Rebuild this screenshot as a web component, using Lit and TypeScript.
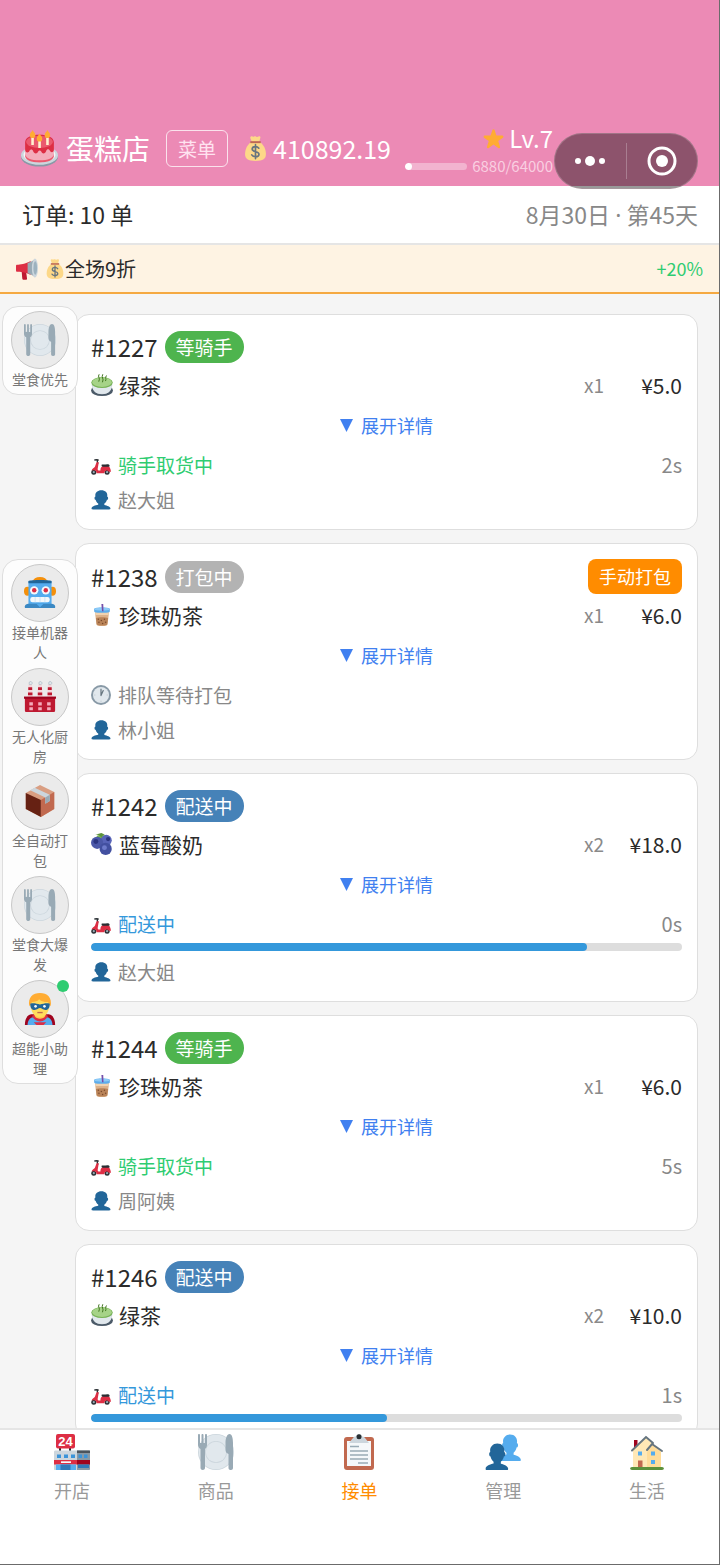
import { LitElement, html, css, svg, nothing } from 'lit';
import { customElement, property } from 'lit/decorators.js';
import { classMap } from 'lit/directives/class-map.js';

const BUST =
  'M24 26.8v-2.57c2-1.35 4.08-3.78 4.7-6.9.19.1.21.17.42.17.99 0 1.71-1.28 1.71-2.87 0-1.56-.83-2.82-1.8-2.86.19-.67.3-1.58.3-2.74C29.32 5.17 26 .53 18.54.53 11.91.53 7.76 5.17 7.76 9.03c0 1.13.07 2.05.19 2.76-.91.14-1.63 1.35-1.63 2.84 0 1.59.8 2.87 1.8 2.87.2 0 .02-.06.2-.17.63 3.12 2.68 5.55 4.68 6.9v2.41c-5 .65-12 3.44-12 6.24v1.06C1 35 2.08 35 3.14 35h29.72C33.92 35 35 35 35 33.94v-1.06c0-2.62-6-5.23-11-6.08z';

const icons = {
  cake: svg`
    <ellipse cx="18" cy="26" rx="18" ry="9.5" fill="#8899A6"/>
    <ellipse cx="18" cy="24.5" rx="18" ry="9.3" fill="#CCD6DD"/>
    <ellipse cx="18" cy="24" rx="15.5" ry="7.5" fill="#F5F8FA"/>
    <path d="M4 14v10c0 4 6 7 14 7s14-3 14-7V14z" fill="#F4ABBA"/>
    <path d="M4 23c0 4 6 6.5 14 6.5S32 27 32 23v2c0 4-6 6.5-14 6.5S4 29 4 25z" fill="#EA596E"/>
    <path d="M4 12C4 7 10 4.500 18 4.500S32 7 32 12v7c0 3-3 3.500-4 1-1-2-3-1.500-3.500.500-.8 3-4 3-4.800.500-.6-1.500-2.400-1.500-3 0-.9 2.500-4 2.500-5-.500-.6-2-2.700-2-3.500 0C7 23 4 22 4 19z" fill="#DD2E44"/>
    <ellipse cx="18" cy="11.500" rx="13" ry="6" fill="#EA596E"/>
    <path d="M10 6.500h2.500v8H10zm6.800 3h2.500v8h-2.500zM24.500 6.500H27v8h-2.500z" fill="#FFF2D0"/>
    <path d="M11.300 0c1 2 2.700 3 2.700 5s-1.200 2.700-2.700 2.700S8.600 7 8.600 5s1.700-3 2.700-5zM18 3.500c1 2 2.700 3 2.700 5s-1.200 2.700-2.700 2.700-2.700-.7-2.700-2.700 1.700-3 2.700-5zM25.700 0c1 2 2.700 3 2.700 5s-1.200 2.700-2.700 2.700S23 7 23 5s1.700-3 2.700-5z" fill="#FFAC33"/>`,
  money: svg`
    <path d="M24 8.500c7 4.500 9 12 9 17.500 0 7-4 10-15 10S3 33 3 26c0-5.500 2-13 9-17.500z" fill="#FDD888"/>
    <path d="M11 1c2-1.500 3 .5 4.500 0s2-1 3.500 0 2.500 0 4-.5 2.500.5 2 2L23.500 8h-11L10.500 3c-.3-1 0-1.500.5-2z" fill="#FDD888"/>
    <path d="M10.500 7.500h15v2.800h-15z" fill="#BF6952"/>
    <path d="M22.800 17.500c-1.200-1.600-2.900-2.300-4.800-2.300-2.800 0-4.800 1.300-4.800 3.600 0 5.200 9.800 2.500 9.800 7.400 0 2.300-2.100 3.700-5 3.700-2.400 0-4.300-1-5.400-2.700M18 12.500v20" fill="none" stroke="#67757F" stroke-width="2.400" stroke-linecap="round"/>`,
  star: svg`<path d="M27.290 34.630c-.4 0-.8-.13-1.150-.37L18 28.420l-8.140 5.840a1.970 1.970 0 0 1-3.030-2.200l3.040-9.800-8.070-5.680a1.980 1.980 0 0 1 1.160-3.570L12.950 13l3.180-9.550a1.980 1.980 0 0 1 3.740 0L23 13l10.040.01a1.980 1.980 0 0 1 1.160 3.570l-8.070 5.680 3.040 9.800a1.970 1.970 0 0 1-1.880 2.570z" fill="#FFAC33"/>`,
  horn: svg`
    <path d="M9 19h7l2 14c.2 1.600-.6 2.500-2 2.500h-3.500c-1.300 0-2-.7-2.200-2z" fill="#BE1931"/>
    <path d="M2 11c4 0 14-1 22-6v23c-8-5-18-5.500-22-5.500-1.300 0-2-.8-2-2v-7.500c0-1.200.7-2 2-2z" fill="#DD2E44"/>
    <path d="M19 8.300C24 6.500 28 4 31 1.500v30c-3-2.500-7-5-12-6.500z" fill="#99AAB5"/>
    <ellipse cx="31" cy="16.500" rx="5" ry="15.500" fill="#CCD6DD"/>
    <ellipse cx="31.500" cy="16.500" rx="3" ry="11" fill="#9DB2BF"/>`,
  plate: svg`
    <circle cx="18" cy="18" r="18" fill="#CCD6DD"/>
    <circle cx="18" cy="18" r="17.200" fill="#E1E8ED"/>
    <circle cx="18" cy="18" r="11" fill="#CCD6DD"/>
    <circle cx="18" cy="18" r="10.200" fill="#E1E8ED"/>
    <path d="M0 1c0-1.300 2-1.300 2 0v8h1.500V1c0-1.300 2-1.300 2 0v8H7V1c0-1.300 2-1.300 2 0v10c0 2-1 3.300-2 4v19c0 2.600-4.500 2.600-4.500 0V15C1 14.300 0 13 0 11zM31.500 0C34 0 35 4 35 9v25c0 2.700-4.500 2.700-4.500 0V20c-2-.7-3-2-3-4.500V9c0-5 1.500-9 4-9z" fill="#99AAB5"/>`,
  robot: svg`
    <ellipse cx="18" cy="5" rx="8" ry="5" fill="#F4900C"/>
    <ellipse cx="4" cy="16" rx="4" ry="5" fill="#F4900C"/>
    <ellipse cx="32" cy="16" rx="4" ry="5" fill="#F4900C"/>
    <path d="M5 5c0-1.500 26-1.500 26 0v26H5z" fill="#55ACEE"/>
    <path d="M5 4.500c3-1.500 23-1.500 26 0V7H5z" fill="#226699"/>
    <path d="M1 33c0-2 2-3 4-3h26c2 0 4 1 4 3v2H1z" fill="#3B88C3"/>
    <path d="M14 30h8l-4 4z" fill="#55ACEE"/>
    <circle cx="11.500" cy="15" r="4.700" fill="#F5F8FA"/><circle cx="24.500" cy="15" r="4.700" fill="#F5F8FA"/>
    <circle cx="11.500" cy="15" r="2.500" fill="#DD2E44"/><circle cx="24.500" cy="15" r="2.500" fill="#DD2E44"/>
    <rect x="7" y="22.500" width="22" height="6" rx="2.500" fill="#F5F8FA"/>
    <path d="M12.500 22.500v6m5.500-6v6m5.500-6v6" stroke="#BDDDF4" stroke-width=".8"/>`,
  factory: svg`
    <path d="M4 18 5 4h4l1 14zM15 18l1-14h4l1 14zM26 18l1-14h4l1 14z" fill="#F5D5DA"/>
    <path d="M4.800 7h4.400v3H4.800zm-.3 6h5v3h-5zM15.800 7h4.400v3h-4.400zm-.3 6h5v3h-5zM26.800 7h4.400v3h-4.400zm-.3 6h5v3h-5z" fill="#BE1931"/>
    <path d="M6 4c-1-3 1-4 2.500-3S9 4 8 4zm11 0c-1-3 1-4 2.500-3S20 4 19 4zm11 0c-1-3 1-4 2.500-3S31 4 30 4z" fill="#E1E8ED" stroke="#99AAB5" stroke-width=".6"/>
    <path d="M1 19h34v14c0 1.500-.5 2-2 2H3c-1.500 0-2-.5-2-2z" fill="#BE1931"/>
    <path d="M0 17.500h36v2.500H0z" fill="#A0041E"/>
    <path d="M6 24h4v3.500H6zm10 0h4v3.500h-4zm10 0h4v3.500h-4zM6 29.500h4V33H6zm10 0h4V33h-4zm10 0h4V33h-4z" fill="#F4ABBA"/>`,
  box: svg`
    <path d="M18 0 34 8v19L19 36 2 27V9z" fill="#D99E82"/>
    <path d="m2 9 17 8v19L2 27z" fill="#662113"/>
    <path d="m19 17 15-9v19l-15 9z" fill="#C1694F"/>
    <path d="m7 6 5-3 17 8v7l-5 3v-7z" fill="#CCD6DD"/>
    <path d="m24 14 5-3v7l-5 3z" fill="#99AAB5"/>`,
  hero: svg`
    <path d="M1 36c0-6 2-11 7-12h20c5 1 7 6 7 12z" fill="#A0041E"/>
    <path d="M4 36c0-5 3-9 8-9h12c5 0 8 4 8 9z" fill="#55ACEE"/>
    <path d="M9 26c2 4 5 6 9 6s7-2 9-6l-3-2H12z" fill="#DD2E44"/>
    <path d="M12 20h12v6c-2 4-10 4-12 0z" fill="#FFCC4D"/>
    <path d="M7 10c0 10 4 17 11 17s11-7 11-17c0-7-22-7-22 0z" fill="#FFDC5D"/>
    <path d="M6 15C4 5 10 0 18 0s14 5 12 15l-3-5c-6 1-10-3-10-3-1 2-5 3-8 3z" fill="#FFAC33"/>
    <path d="M7 12c4-1 7 0 11 1 4-1 7-2 11-1 0 5-2 7-5 7s-4-2-6-2-3 2-6 2-5-2-5-7z" fill="#226699"/>
    <circle cx="13" cy="15" r="1.500" fill="#F5F8FA"/><circle cx="23" cy="15" r="1.500" fill="#F5F8FA"/>
    <path d="M15 22h6" stroke="#C1694F" stroke-width="1.500"/>
    <path d="M11 33h14l-3 3h-8z" fill="#DD2E44"/>`,
  tea: svg`
    <ellipse cx="18" cy="27" rx="18" ry="9" fill="#4B5A68"/>
    <path d="M1 14c0 13 6 19 17 19s17-6 17-19z" fill="#CCD6DD"/>
    <path d="M2 20c1.500 9 7 12.500 16 12.500S32.500 29 34 20z" fill="#E1E8ED"/>
    <ellipse cx="18" cy="14" rx="17.500" ry="9" fill="#77B255"/>
    <ellipse cx="18" cy="13.500" rx="16" ry="7.800" fill="#A6D388"/>
    <path d="M13 1c-3 4 3 5 0 11M19 1c-3 5 3 6 0 12M25 3c-3 4 1 4-1 8" fill="none" stroke="#3E721D" stroke-width="1.600" stroke-linecap="round"/>`,
  boba: svg`
    <path d="m6 10 3 23c.3 2 2 3 9 3s8.700-1 9-3l3-23z" fill="#DDB28A"/>
    <path d="M6 9h24l-1.200 9H7.200z" fill="#F1D3B0"/>
    <path d="M5 8c2-3 24-3 26 0l-.5 5C25 15 11 15 5.500 13z" fill="#5DADEC"/>
    <ellipse cx="18" cy="8.500" rx="12.500" ry="2.700" fill="#8CCAF7"/>
    <path d="m17 0 3-.5L20.500 12H18z" fill="#744EAA"/>
    <path d="M8 23c4-2 16-2 20 0l-1.300 10c-.3 3-17 3-17.400 0z" fill="#B98358"/>
    <g fill="#7A4A2E"><circle cx="12" cy="25" r="1.200"/><circle cx="17" cy="27" r="1.200"/><circle cx="22" cy="25" r="1.200"/><circle cx="13" cy="30" r="1.200"/><circle cx="19" cy="32" r="1.200"/><circle cx="24" cy="30" r="1.200"/></g>`,
  berry: svg`
    <path d="M9 6c2-5 6 0 7-5 2 4 6 1 8 5-2 4-5 3-7 6-2-3-6-2-8-6z" fill="#77B255"/>
    <circle cx="25" cy="12" r="9" fill="#5864B8"/>
    <circle cx="10" cy="16" r="10" fill="#4B58A8"/>
    <circle cx="24" cy="26" r="10" fill="#4250A0"/>
    <circle cx="8" cy="14" r="4" fill="#2B3580"/><circle cx="22" cy="24" r="4" fill="#6E7BCB"/>
    <circle cx="28" cy="10" r="3.500" fill="#2B3580"/>
    <path d="M7 3c5-1 8 1 10 5 1-4 4-6 6-5l-6-3z" fill="#5C913B"/>`,
  scooter: svg`
    <circle cx="5" cy="31" r="4.500" fill="#292F33"/><circle cx="5" cy="31" r="2" fill="#99AAB5"/>
    <circle cx="29" cy="31" r="4.500" fill="#292F33"/><circle cx="29" cy="31" r="2" fill="#99AAB5"/>
    <path d="M7 9c3-1 5-1 6 0M11 9l1 6" stroke="#292F33" stroke-width="2.500" fill="none" stroke-linecap="round"/>
    <path d="M10 13h4l-2 12c0 3 2 3 5 3 0-6 3-8 7-8h7c3 1 4 5 5 10h-4c-2-3-6-3-8 1v2H10c0-5-3-7-9-5 1-4 5-5 6-7z" fill="#DD2E44"/>
    <path d="M20 17c4 1 8-1 12 0 2 1 2 4 0 4H21c-2 0-3-4-1-4z" fill="#292F33"/>`,
  bust: svg`<path d=${BUST} fill="#226699"/>`,
  busts: svg`
    <path d=${BUST} transform="translate(13) scale(.65 .77)" fill="#55ACEE"/>
    <path d=${BUST} transform="translate(0 9) scale(.66 .77)" fill="#226699"/>`,
  clock: svg`
    <circle cx="18" cy="18" r="18" fill="#8899A6"/>
    <circle cx="18" cy="18" r="14.500" fill="#E1E8ED"/>
    <path d="M18 5v3m0 20v3M5 18h3m20 0h3" stroke="#B5C1CA" stroke-width="1.200"/>
    <path d="M18 19V8m0 11 4-9" stroke="#66757F" stroke-width="2.200" stroke-linecap="round"/>`,
  shop: svg`
    <path d="M5 13h2v5H5zm10 0h2v5h-2z" fill="#292F33"/>
    <path d="M0 18c0-1 .5-1.500 1.500-1.500H23V36H1c-.6 0-1-.4-1-1z" fill="#CCD6DD"/>
    <path d="M23 16.500h11.500c1 0 1.500.5 1.500 1.500v17c0 .6-.4 1-1 1H23z" fill="#8899A6"/>
    <path d="M23 16.500h13V19H23z" fill="#4B545D"/>
    <path d="M3 20.500h4V24H3zm7 0h4V24h-4zm7 0h4V24h-4zm7.500 0H28V24h-3.500zm5.500 0h3.500V24H30z" fill="#3B94D9"/>
    <path d="M0 26h23v4.500H0z" fill="#DD2E44"/><path d="M23 26h13v4.500H23z" fill="#A0041E"/>
    <path d="M7 27.300h10v1.700H7z" fill="#F5F8FA"/>
    <path d="M2 30.500h20V36H2z" fill="#55ACEE"/><path d="M6.500 30.500h10V36h-10zM24 30.500h11V34H24z" fill="#3078B8"/>
    <rect x="2" y="0" width="19" height="14.500" rx="2" fill="#DD2E44"/>
    <text x="11.500" y="12" text-anchor="middle" font-family="Liberation Sans, sans-serif" font-size="13" font-weight="700" fill="#fff">24</text>`,
  clipboard: svg`
    <rect x="3" y="3" width="30" height="33" rx="3" fill="#C1694F"/>
    <path d="M6 7h24v25H6z" fill="#F5F8FA"/>
    <path d="M9 12.500h9M9 17h18M9 21h18M9 25h18M17 29h10" stroke="#99AAB5" stroke-width="1.300"/>
    <path d="M12 4c1-2 3-1 3-2 1-2.700 5-2.700 6 0 0 1 2 0 3 2l4 5H8z" fill="#CCD6DD"/>
    <circle cx="18" cy="2.800" r="2.500" fill="#292F33"/>`,
  house: svg`
    <path d="M5 6h3.500v8H5z" fill="#A0041E"/>
    <path d="M4 16 17 4l6 5 9 8v17H4z" fill="#FFE8B6"/>
    <path d="m18 18 6-8 8 8v16H18z" fill="#FFDC99"/>
    <path d="M3 16.500 17 3l7 6M18 16l5-6 10 7" fill="none" stroke="#66757F" stroke-width="2" stroke-linecap="round"/>
    <path d="M9 17.500h4v4H9zm13 0h4v4h-4zM22 26h4v4h-4z" fill="#55ACEE"/>
    <path d="M9 26.500h4.500V34H9z" fill="#C1694F"/>
    <path d="M3 33h30c2.500 0 2.500 3 0 3H3c-2.500 0-2.500-3 0-3z" fill="#5C913B"/>`,
};

type IconName = keyof typeof icons;

interface Order {
  id: number;
  state: 'waiting' | 'packing' | 'delivering';
  icon: IconName;
  product: string;
  qty: number;
  price: string;
  seconds?: number;
  progress?: number;
  customer?: string;
}

const STATES = {
  waiting: { badge: '等骑手', status: '骑手取货中', icon: 'scooter' as IconName },
  packing: { badge: '打包中', status: '排队等待打包', icon: 'clock' as IconName },
  delivering: { badge: '配送中', status: '配送中', icon: 'scooter' as IconName },
};

const ORDERS: Order[] = [
  { id: 1227, state: 'waiting', icon: 'tea', product: '绿茶', qty: 1, price: '5.0', seconds: 2, customer: '赵大姐' },
  { id: 1238, state: 'packing', icon: 'boba', product: '珍珠奶茶', qty: 1, price: '6.0', customer: '林小姐' },
  { id: 1242, state: 'delivering', icon: 'berry', product: '蓝莓酸奶', qty: 2, price: '18.0', seconds: 0, progress: 84, customer: '赵大姐' },
  { id: 1244, state: 'waiting', icon: 'boba', product: '珍珠奶茶', qty: 1, price: '6.0', seconds: 5, customer: '周阿姨' },
  { id: 1246, state: 'delivering', icon: 'tea', product: '绿茶', qty: 2, price: '10.0', seconds: 1, progress: 50 },
];

const HELPERS: { icon: IconName; label: string; active?: boolean }[] = [
  { icon: 'robot', label: '接单机器人' },
  { icon: 'factory', label: '无人化厨房' },
  { icon: 'box', label: '全自动打包' },
  { icon: 'plate', label: '堂食大爆发' },
  { icon: 'hero', label: '超能小助理', active: true },
];

const TABS: { icon: IconName; label: string }[] = [
  { icon: 'shop', label: '开店' },
  { icon: 'plate', label: '商品' },
  { icon: 'clipboard', label: '接单' },
  { icon: 'busts', label: '管理' },
  { icon: 'house', label: '生活' },
];

@customElement('app-icon')
class AppIcon extends LitElement {
  static styles = css`
    :host {
      display: block;
      flex: none;
      width: 20px;
      height: 20px;
    }

    svg {
      display: block;
      width: 100%;
      height: 100%;
    }
  `;

  @property() name: IconName = 'star';

  render() {
    return html`<svg viewBox="0 0 36 36" aria-hidden="true">${icons[this.name]}</svg>`;
  }
}

@customElement('order-card')
class OrderCard extends LitElement {
  static styles = css`
    :host {
      display: block;
      flex: none;
      padding: 15px;
      background: #fff;
      border: 1px solid #dedede;
      border-radius: 14px;
      color: #2b2b2b;
    }

    button {
      font-family: inherit;
      border: none;
      cursor: pointer;
    }

    .head {
      display: flex;
      align-items: center;
      gap: 7px;
      min-height: 34px;
    }

    .number {
      font-size: 24px;
      line-height: 32px;
    }

    .badge {
      padding: 0 11px;
      border-radius: 16px;
      font-size: 19px;
      line-height: 32px;
      color: #fff;
    }

    .badge.waiting {
      background: #4eb44e;
    }

    .badge.packing {
      background: #b3b3b3;
    }

    .badge.delivering {
      background: #4682b8;
    }

    .pack {
      margin-left: auto;
      padding: 0 11px;
      border-radius: 8px;
      background: #ff8c00;
      color: #fff;
      font-size: 18px;
      line-height: 35px;
    }

    .product {
      display: flex;
      align-items: center;
      margin-top: 5px;
      font-size: 21px;
      line-height: 32px;
    }

    .product app-icon {
      width: 22px;
      height: 22px;
      margin-right: 6px;
    }

    .qty {
      margin-left: auto;
      font-size: 19px;
      color: #8a8a8a;
    }

    .price {
      width: 78px;
      text-align: right;
    }

    .toggle {
      display: flex;
      align-items: center;
      justify-content: center;
      gap: 8px;
      width: 100%;
      height: 50px;
      padding: 0 0 2px;
      background: none;
      color: #4080f0;
      font-size: 18px;
    }

    .toggle svg {
      width: 13px;
      height: 13px;
    }

    .line {
      display: flex;
      align-items: center;
      gap: 7px;
      font-size: 19px;
      line-height: 28px;
      color: #888;
    }

    .line.waiting .status {
      color: #2ecc71;
    }

    .line.delivering .status {
      color: #3498db;
    }

    .time {
      margin-left: auto;
      font-size: 20px;
    }

    .bar {
      height: 8px;
      margin-top: 5px;
      border-radius: 4px;
      background: #ddd;
      overflow: hidden;
    }

    .fill {
      height: 100%;
      border-radius: 4px;
      background: #3498db;
    }

    .customer {
      margin-top: 7px;
    }
  `;

  @property({ attribute: false }) order!: Order;

  render() {
    const o = this.order;
    const info = STATES[o.state];
    return html`
      <div class="head">
        <span class="number">#${o.id}</span>
        <span class="badge ${o.state}">${info.badge}</span>
        ${o.state === 'packing' ? html`<button class="pack">手动打包</button>` : nothing}
      </div>
      <div class="product">
        <app-icon name=${o.icon}></app-icon>
        <span>${o.product}</span>
        <span class="qty">x${o.qty}</span>
        <span class="price">¥${o.price}</span>
      </div>
      <button class="toggle">
        <svg viewBox="0 0 12 12" aria-hidden="true"><path d="M0 0h12L6 12z" fill="currentColor" /></svg>
        展开详情
      </button>
      <div class="line ${o.state}">
        <app-icon name=${info.icon}></app-icon>
        <span class="status">${info.status}</span>
        ${o.seconds === undefined ? nothing : html`<span class="time">${o.seconds}s</span>`}
      </div>
      ${o.progress === undefined
        ? nothing
        : html`<div class="bar"><div class="fill" style="width: ${o.progress}%"></div></div>`}
      ${o.customer
        ? html`
            <div class="line customer">
              <app-icon name="bust"></app-icon>
              <span>${o.customer}</span>
            </div>
          `
        : nothing}
    `;
  }
}

@customElement('app-root')
class AppRoot extends LitElement {
  static styles = css`
    :host {
      display: flex;
      flex-direction: column;
      box-sizing: border-box;
      height: 100vh;
      border-right: 1px solid #6b6b6b;
      border-bottom: 1px solid #6b6b6b;
      background: #fff;
      font-family: 'Noto Sans CJK SC', 'Noto Sans', sans-serif;
      color: #2b2b2b;
    }

    button {
      font-family: inherit;
      border: none;
      padding: 0;
      background: none;
      cursor: pointer;
    }

    header {
      position: relative;
      display: flex;
      align-items: center;
      padding: 110px 166px 0 21px;
      height: 76px;
      flex: none;
      background: #ec8ab5;
      color: #fff;
    }

    .cake {
      width: 37px;
      height: 37px;
      margin-right: 8px;
    }

    h1 {
      margin: 0 16px 0 0;
      font-size: 28px;
      line-height: 40px;
      font-weight: 400;
      white-space: nowrap;
    }

    .menu {
      padding: 0 11px;
      margin-right: 15px;
      border: 1px solid rgba(255, 255, 255, 0.75);
      border-radius: 6px;
      color: #ffe3f0;
      font-size: 19px;
      line-height: 35px;
    }

    .bag {
      width: 25px;
      height: 25px;
      margin-right: 5px;
    }

    .coins {
      font-size: 25px;
      line-height: 36px;
    }

    .level {
      display: flex;
      flex-direction: column;
      align-items: flex-end;
      margin-left: auto;
      padding-top: 4px;
    }

    .rank {
      display: flex;
      align-items: center;
      gap: 5px;
      font-size: 24px;
      line-height: 32px;
    }

    .rank app-icon {
      width: 21px;
      height: 21px;
    }

    .exp {
      display: flex;
      align-items: center;
      gap: 5px;
      font-size: 15px;
      line-height: 24px;
      color: #f9cfe1;
    }

    .track {
      width: 62px;
      height: 7px;
      border-radius: 4px;
      background: rgba(255, 255, 255, 0.35);
      overflow: hidden;
    }

    .track div {
      height: 100%;
      border-radius: 4px;
      background: #fff;
    }

    .capsule {
      position: absolute;
      z-index: 3;
      top: 133px;
      right: 21px;
      display: flex;
      align-items: center;
      box-sizing: border-box;
      width: 144px;
      height: 56px;
      border: 1px solid rgba(180, 150, 160, 0.5);
      border-radius: 28px;
      background: rgba(0, 0, 0, 0.4);
    }

    .capsule button {
      flex: 1;
      display: flex;
      justify-content: center;
    }

    .capsule button + button {
      border-left: 1px solid rgba(255, 255, 255, 0.25);
    }

    .capsule svg {
      width: 36px;
      height: 36px;
    }

    .summary {
      display: flex;
      align-items: center;
      justify-content: space-between;
      flex: none;
      padding: 0 21px 0 22px;
      border-bottom: 2px solid #e5e5e5;
      font-size: 23px;
      line-height: 57px;
    }

    .date {
      color: #888;
    }

    /* the CJK face draws the middle dot full width */
    .dot-sep {
      font-family: 'Noto Sans', sans-serif;
      line-height: 1;
    }

    .promo {
      display: flex;
      align-items: center;
      flex: none;
      padding: 0 16px;
      border-bottom: 2px solid #f5a942;
      background: #fef3e3;
      font-size: 20px;
      line-height: 47px;
    }

    .promo app-icon:first-child {
      width: 22px;
      height: 22px;
      margin-right: 7px;
    }

    .bonus {
      margin-left: auto;
      font-size: 18px;
      color: #2ecc71;
    }

    main {
      position: relative;
      flex: 1;
      min-height: 0;
      background: #f5f5f5;
    }

    .orders {
      display: flex;
      flex-direction: column;
      gap: 13px;
      box-sizing: border-box;
      height: 100%;
      padding: 20px 21px 20px 75px;
      overflow-y: auto;
      scrollbar-width: none;
    }

    .side {
      position: absolute;
      top: 12px;
      left: 2px;
      display: flex;
      flex-direction: column;
      gap: 164px;
    }

    .panel {
      display: flex;
      flex-direction: column;
      gap: 5px;
      box-sizing: border-box;
      width: 76px;
      padding: 4px 8px;
      border: 1px solid #dedede;
      border-radius: 16px;
      background: #fdfdfd;
    }

    .helper {
      position: relative;
      display: flex;
      flex-direction: column;
      align-items: center;
      color: #777;
      font-size: 14px;
      line-height: 20px;
    }

    .helper span:nth-child(2) {
      padding-bottom: 1px;
    }

    .round {
      display: flex;
      align-items: center;
      justify-content: center;
      box-sizing: border-box;
      width: 58px;
      height: 58px;
      border: 1px solid #c8c8c8;
      border-radius: 50%;
      background: #ebebeb;
    }

    .round app-icon {
      width: 32px;
      height: 32px;
    }

    .dot {
      position: absolute;
      top: 0;
      right: 0;
      width: 12px;
      height: 12px;
      border-radius: 50%;
      background: #2ecc71;
    }

    nav {
      display: grid;
      grid-template-columns: repeat(5, 1fr);
      flex: none;
      padding: 4px 0 62px;
      border-top: 2px solid #e5e5e5;
      background: #fff;
    }

    nav a {
      display: flex;
      flex-direction: column;
      align-items: center;
      gap: 8px;
      color: #999;
      font-size: 18px;
      line-height: 24px;
      text-decoration: none;
    }

    nav a.current {
      color: #ff8c00;
    }

    nav app-icon {
      width: 36px;
      height: 36px;
    }
  `;

  render() {
    return html`
      <header>
        <app-icon class="cake" name="cake"></app-icon>
        <h1>蛋糕店</h1>
        <button class="menu">菜单</button>
        <app-icon class="bag" name="money"></app-icon>
        <span class="coins">410892.19</span>
        <div class="level">
          <div class="rank"><app-icon name="star"></app-icon>Lv.7</div>
          <div class="exp">
            <div class="track"><div style="width: ${(6880 / 64000) * 100}%"></div></div>
            6880/64000
          </div>
        </div>
        <div class="capsule">
          <button aria-label="更多">
            <svg viewBox="0 0 36 36" fill="#fff">
              <circle cx="6" cy="18" r="3" /><circle cx="18" cy="18" r="5" /><circle cx="30" cy="18" r="3" />
            </svg>
          </button>
          <button aria-label="关闭">
            <svg viewBox="0 0 36 36">
              <circle cx="18" cy="18" r="13" fill="none" stroke="#fff" stroke-width="3" />
              <circle cx="18" cy="18" r="6" fill="#fff" />
            </svg>
          </button>
        </div>
      </header>
      <div class="summary">
        <span>订单: 10 单</span>
        <span class="date">8月30日 <span class="dot-sep">·</span> 第45天</span>
      </div>
      <div class="promo">
        <app-icon name="horn"></app-icon>
        <app-icon name="money"></app-icon>
        <span>全场9折</span>
        <span class="bonus">+20%</span>
      </div>
      <main>
        <div class="orders">${ORDERS.map((o) => html`<order-card .order=${o}></order-card>`)}</div>
        <div class="side">
          <div class="panel">${this._helper('plate', '堂食优先')}</div>
          <div class="panel">${HELPERS.map((h) => this._helper(h.icon, h.label, h.active))}</div>
        </div>
      </main>
      <nav>
        ${TABS.map(
          (t) => html`
            <a href="#" class=${classMap({ current: t.label === '接单' })}>
              <app-icon name=${t.icon}></app-icon>
              <span>${t.label}</span>
            </a>
          `
        )}
      </nav>
    `;
  }

  _helper(icon: IconName, label: string, active = false) {
    return html`
      <button class="helper">
        <span class="round"><app-icon name=${icon}></app-icon></span>
        <span>${label}</span>
        ${active ? html`<span class="dot"></span>` : nothing}
      </button>
    `;
  }
}
